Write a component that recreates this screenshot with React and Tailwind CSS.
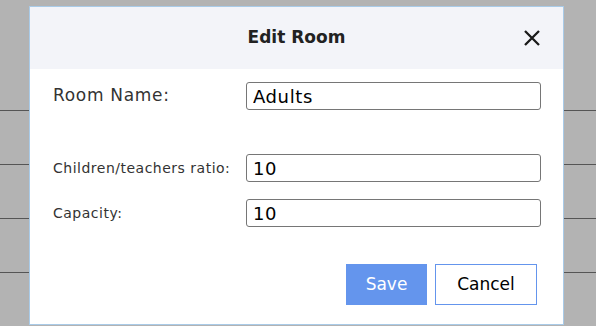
import React from 'react';

const rows = ['h-[55px]', 'h-[54px]', 'h-[54px]', 'h-[54px]'];

const Field = ({ label, value, labelClass }) => (
  <div className="flex items-center">
    <label className={`w-[193px] shrink-0 text-[#333] ${labelClass}`}>{label}</label>
    <input
      type="text"
      defaultValue={value}
      className="w-[295px] h-[28px] rounded-[3px] border border-[#767676] bg-white px-[6px] text-[18px] tracking-[0.6px] text-black outline-none"
    />
  </div>
);

const App = () => {
  return (
    <div
      className="relative w-[596px] h-[326px] overflow-hidden bg-[#b3b3b3]"
      style={{ fontFamily: '"DejaVu Sans", Verdana, sans-serif' }}
    >
      {/* table rows behind the overlay */}
      <div className="pt-[56px]">
        {rows.map((h, i) => (
          <div key={i} className={`${h} border-b border-[#555]`} />
        ))}
      </div>

      {/* Modal */}
      <div className="absolute left-[29px] top-[6px] w-[535px] h-[319px] border border-[#a9cbe8] bg-white">
        <div className="relative flex h-[62px] items-center justify-center bg-[#f3f4f9]">
          <h2 className="text-[17px] font-bold text-[#222]">Edit Room</h2>
          <button className="absolute right-[22px] top-1/2 -translate-y-1/2 text-[#1a1a1a]">
            <svg width="18" height="18" viewBox="0 0 18 18">
              <path d="M2 2 L16 16 M16 2 L2 16" stroke="currentColor" strokeWidth="2.3" />
            </svg>
          </button>
        </div>

        <div className="pl-[23px] pr-[22px] pt-[13px]">
          <Field label="Room Name:" value="Adults" labelClass="text-[17px] tracking-[0.7px]" />
          <div className="mt-[44px] flex flex-col gap-[17px]">
            <Field label="Children/teachers ratio:" value="10" labelClass="text-[14px] tracking-[0.5px]" />
            <Field label="Capacity:" value="10" labelClass="text-[14px] tracking-[0.5px]" />
          </div>
          <div className="mt-[37px] flex justify-end gap-[8px] pr-[4px]">
            <button className="h-[41px] w-[81px] bg-[#6495ed] text-[17px] text-white">Save</button>
            <button className="h-[41px] w-[102px] border border-[#6495ed] bg-white text-[17px] text-black">Cancel</button>
          </div>
        </div>
      </div>
    </div>
  );
};

export default App;
